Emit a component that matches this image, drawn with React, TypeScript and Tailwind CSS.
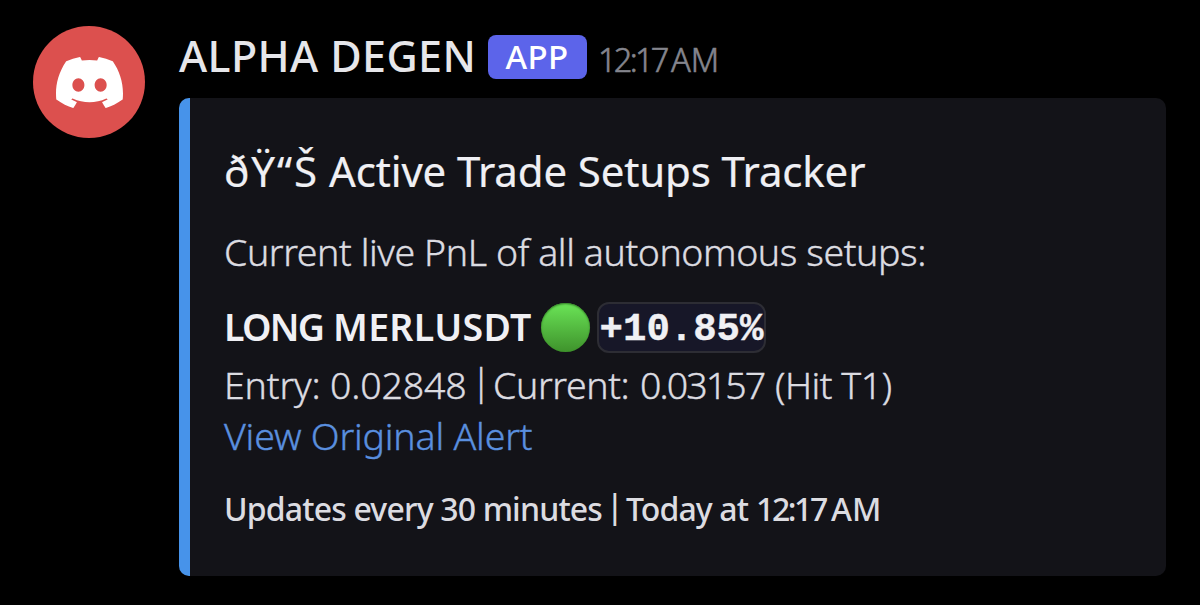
import { SiDiscord } from "react-icons/si"

function MessageHeader() {
  return (
    <div className="flex h-[72px] items-start whitespace-nowrap">
      <h1 className="mt-1 w-[309px] text-[43px] leading-[52px] font-medium tracking-[0.4px] text-[#e6e6ea]">
        ALPHA DEGEN
      </h1>
      <span className="mt-[8.5px] flex h-[44.5px] w-[99px] items-center justify-center rounded-[8px] bg-[#5c64ea] pr-px text-[33px] leading-[44px] font-medium tracking-[0.3px] text-white">
        APP
      </span>
      <span className="mt-[12px] ml-[11px] flex text-[32.5px] leading-[44px] font-light text-[#84858d] [-webkit-text-stroke:0.6px]">
        <span className="w-[73px] tracking-[-2.7px]">12:17</span>
        <span>AM</span>
      </span>
    </div>
  )
}

function TradeEmbed() {
  return (
    <div className="flex h-[478px] w-[987px] overflow-hidden rounded-[10px] bg-[#131318] whitespace-nowrap">
      <div className="w-[11px] shrink-0 bg-[#4793ea]" />
      <div className="flex flex-col items-start pt-[45px] pl-[34px] text-[37.5px] leading-[50px] font-light text-[#dcdce1]">
        <h2 className="flex text-[42px] leading-[56px] font-normal text-[#f0f0f4] [-webkit-text-stroke:0.2px]">
          <span className="w-[105px] tracking-[1.9px]">ðŸ“Š</span>
          <span className="tracking-[-0.15px]">Active Trade Setups Tracker</span>
        </h2>
        <p className="mt-7 tracking-[-0.42px] [-webkit-text-stroke:0.4px]">
          Current live PnL of all autonomous setups:
        </p>

        <div className="mt-[25px] flex h-[51px] items-center">
          <span className="mb-0.5 flex w-[317px] font-semibold text-[#f0f0f4]">
            <span className="w-[109px] tracking-[-1.7px]">LONG</span>
            <span className="tracking-[0.3px]">MERLUSDT</span>
          </span>
          <span className="size-[49px] rounded-full bg-linear-to-b from-[#6be557] to-[#3f932c] shadow-[inset_0_1px_2px_#2f7a22]" />
          <code className="ml-[7px] flex h-[51px] w-[169px] items-center justify-center rounded-[12px] border-2 border-[#2d2d34] bg-[#171728] pt-[5px] font-['Liberation_Mono',monospace] text-[39px] font-bold text-[#f0f0f4] [-webkit-text-stroke:0.4px]">
            +10.85%
          </code>
        </div>

        <p className="mt-[7px] flex [-webkit-text-stroke:0.4px]">
          <span className="w-[247px] tracking-[-0.15px]">Entry: 0.02848</span>
          <span className="-mt-1 w-[22px]">|</span>
          <span className="w-[147px] tracking-[-0.4px]">Current:</span>
          <span className="w-[135px] tracking-[-1.9px]">0.03157</span>
          <span className="tracking-[-0.5px]">(Hit T1)</span>
        </p>
        <a className="mt-px tracking-[-0.2px] text-[#5a8fdf] [-webkit-text-stroke:0.4px]">
          View Original Alert
        </a>

        <p className="mt-[26px] flex text-[32px] leading-[44px] font-medium">
          <span className="w-[382px] tracking-[-0.83px]">Updates every 30 minutes</span>
          <span className="-mt-[3px] w-[20px]">|</span>
          <span className="w-[130px] tracking-[-0.9px]">Today at</span>
          <span className="w-[75px] tracking-[-2.4px]">12:17</span>
          <span>AM</span>
        </p>
      </div>
    </div>
  )
}

export default function App() {
  return (
    <div className="flex h-[605px] w-[1200px] overflow-hidden bg-black pt-[26px] pl-[33px] font-['Noto_Sans',sans-serif]">
      <div className="mr-[34px] flex size-[112px] shrink-0 items-center justify-center rounded-full bg-[#dc504e]">
        <SiDiscord className="size-[67px] text-white" />
      </div>
      <div>
        <MessageHeader />
        <TradeEmbed />
      </div>
    </div>
  )
}
